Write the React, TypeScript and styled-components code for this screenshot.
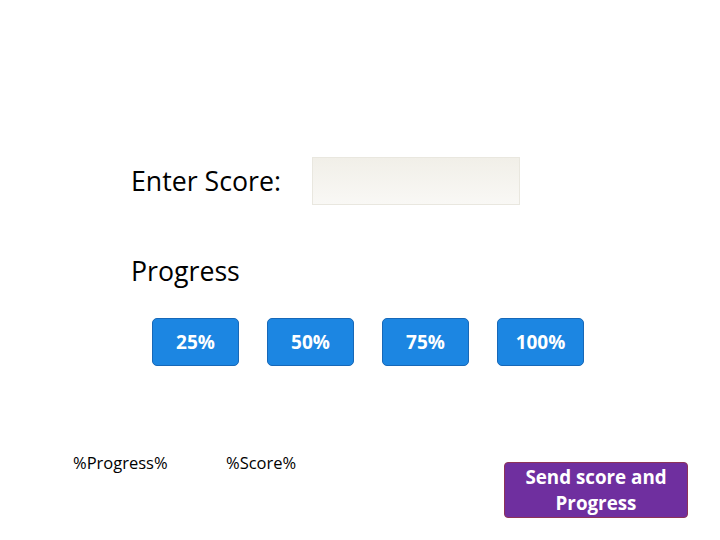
import React, { useState } from "react";
import styled, { createGlobalStyle } from "styled-components";

const GlobalStyle = createGlobalStyle`
  html, body {
    margin: 0;
    padding: 0;
    background: #ffffff;
    font-family: "Open Sans", "Noto Sans", sans-serif;
    color: #000;
  }
`;

const Page = styled.div`
  width: 720px;
  height: 540px;
  display: flex;
  flex-direction: column;
  box-sizing: border-box;
  padding: 157px 0 0 0;
`;

const Form = styled.div`
  padding-left: 131px;
  display: flex;
  flex-direction: column;
`;

const ScoreRow = styled.div`
  display: flex;
  align-items: center;
  height: 48px;
`;

const Label = styled.div`
  font-size: 26.7px;
  width: 181px;
  line-height: 32px;
`;

const ScoreInput = styled.input`
  width: 208px;
  height: 48px;
  box-sizing: border-box;
  border: 1px solid #e9e7df;
  background: linear-gradient(#f1efe8, #f9f8f5);
  outline: none;
  font-family: inherit;
  font-size: 18px;
  padding: 0 8px;
`;

const ProgressLabel = styled(Label)`
  margin-top: 50px;
`;

const ButtonRow = styled.div`
  display: flex;
  gap: 28px;
  margin: 31px 0 0 21px;
`;

const PercentButton = styled.button<{ $active?: boolean }>`
  width: 87px;
  height: 48px;
  box-sizing: border-box;
  border: 1px solid #1768b8;
  border-radius: 5px;
  background: ${(p) => (p.$active ? "#136fc4" : "#1c86e2")};
  color: #fff;
  font-family: "Open Sans", sans-serif;
  font-weight: 700;
  font-size: 19px;
  cursor: pointer;
  padding: 0;
`;

const Footer = styled.div`
  display: flex;
  align-items: flex-start;
  margin-top: 86px;
  padding-left: 73px;
`;

const Token = styled.div`
  font-size: 16.5px;
  line-height: 22px;
  width: 153px;
`;

const SendButton = styled.button`
  margin-left: auto;
  margin-right: 32px;
  margin-top: 10px;
  width: 184px;
  height: 56px;
  box-sizing: border-box;
  background: #6f2f9f;
  border: 1px solid #8e3358;
  border-radius: 4px;
  color: #fff;
  font-family: "Open Sans", sans-serif;
  font-weight: 700;
  font-size: 18.8px;
  line-height: 26px;
  padding: 0 4px;
  cursor: pointer;
`;

const levels = ["25%", "50%", "75%", "100%"];

export default function App() {
  const [score, setScore] = useState("");
  const [progress, setProgress] = useState<string | null>(null);

  return (
    <>
      <GlobalStyle />
      <Page>
        <Form>
          <ScoreRow>
            <Label>Enter Score:</Label>
            <ScoreInput value={score} onChange={(e) => setScore(e.target.value)} />
          </ScoreRow>
          <ProgressLabel>Progress</ProgressLabel>
          <ButtonRow>
            {levels.map((l) => (
              <PercentButton key={l} $active={progress === l} onClick={() => setProgress(l)}>
                {l}
              </PercentButton>
            ))}
          </ButtonRow>
        </Form>
        <Footer>
          <Token>%Progress%</Token>
          <Token>%Score%</Token>
          <SendButton>Send score and Progress</SendButton>
        </Footer>
      </Page>
    </>
  );
}
